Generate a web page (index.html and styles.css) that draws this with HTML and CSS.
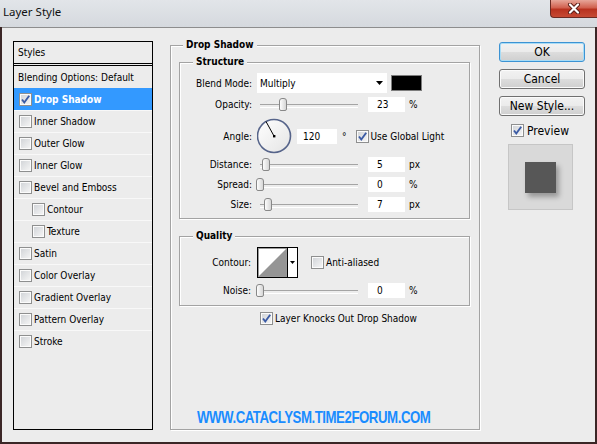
FILE: index.html
```html
<!DOCTYPE html>
<html>
<head>
<meta charset="utf-8">
<title>Layer Style</title>
<link rel="stylesheet" href="styles.css">
</head>
<body>
<div class="window">
  <div class="titlebar">
    <span class="title">Layer Style</span>
    <div class="close">
      <svg width="16" height="11" viewBox="0 0 16 11"><path d="M4 1.5 L12 9.5 M12 1.5 L4 9.5" stroke="#5a1d16" stroke-width="4" stroke-linecap="round"/><path d="M4 1.5 L12 9.5 M12 1.5 L4 9.5" stroke="#fff" stroke-width="2.2" stroke-linecap="round"/></svg>
    </div>
  </div>
  <div class="client">
    <div class="styles">
      <div class="styles-head">Styles</div>
      <div class="item plain">Blending Options: Default</div>
      <div class="item selected"><span class="cb"><svg width="11" height="11" viewBox="0 0 11 11"><path d="M2 5.5 L4.3 8.5 L9.2 1.8" stroke="#3b5ba5" stroke-width="1.9" fill="none"/></svg></span>Drop Shadow</div>
      <div class="item"><span class="cb"></span>Inner Shadow</div>
      <div class="item"><span class="cb"></span>Outer Glow</div>
      <div class="item"><span class="cb"></span>Inner Glow</div>
      <div class="item"><span class="cb"></span>Bevel and Emboss</div>
      <div class="item sub"><span class="cb"></span>Contour</div>
      <div class="item sub"><span class="cb"></span>Texture</div>
      <div class="item"><span class="cb"></span>Satin</div>
      <div class="item"><span class="cb"></span>Color Overlay</div>
      <div class="item"><span class="cb"></span>Gradient Overlay</div>
      <div class="item"><span class="cb"></span>Pattern Overlay</div>
      <div class="item"><span class="cb"></span>Stroke</div>
    </div>

    <fieldset class="group outer">
      <legend>Drop Shadow</legend>
      <fieldset class="group inner structure">
        <legend>Structure</legend>
        <div class="row r-blend">
          <span class="lbl">Blend Mode:</span>
          <div class="select"><span>Multiply</span><svg width="7" height="4" viewBox="0 0 7 4"><path d="M0 0 H7 L3.5 4 Z" fill="#000"/></svg></div>
          <span class="swatch"></span>
        </div>
        <div class="row r-15 r-opacity">
          <span class="lbl">Opacity:</span>
          <div class="slider"><span class="thumb" style="left:19px"></span></div>
          <span class="num">23</span><span class="unit">%</span>
        </div>
        <div class="row r-angle">
          <span class="lbl">Angle:</span>
          <svg class="dial" width="36" height="36" viewBox="0 0 36 36">
            <defs><linearGradient id="dg" x1="0" y1="0" x2="1" y2="1"><stop offset="0" stop-color="#ffffff"/><stop offset="1" stop-color="#e4e4e4"/></linearGradient></defs>
            <circle cx="17" cy="18" r="16.5" fill="url(#dg)" stroke="#56648a" stroke-width="1.6"/>
            <line x1="17" y1="18" x2="9" y2="3.5" stroke="#000" stroke-width="1"/>
            <rect x="16" y="17" width="2.4" height="2.4" fill="#000"/>
          </svg>
          <span class="num num-angle">120</span><span class="deg">°</span>
          <span class="cb cb-global"><svg width="11" height="11" viewBox="0 0 11 11"><path d="M2 5.5 L4.3 8.5 L9.2 1.8" stroke="#3b5ba5" stroke-width="1.9" fill="none"/></svg></span><span class="cbtext">Use Global Light</span>
        </div>
        <div class="row r-15 r-distance">
          <span class="lbl">Distance:</span>
          <div class="slider"><span class="thumb" style="left:2px"></span></div>
          <span class="num">5</span><span class="unit">px</span>
        </div>
        <div class="row r-15 r-spread">
          <span class="lbl">Spread:</span>
          <div class="slider"><span class="thumb" style="left:-4px"></span></div>
          <span class="num">0</span><span class="unit">%</span>
        </div>
        <div class="row r-15 r-size">
          <span class="lbl">Size:</span>
          <div class="slider"><span class="thumb" style="left:4px"></span></div>
          <span class="num">7</span><span class="unit">px</span>
        </div>
      </fieldset>

      <fieldset class="group inner quality">
        <legend>Quality</legend>
        <div class="row r-contour">
          <span class="lbl">Contour:</span>
          <svg class="contour" width="41" height="31" viewBox="0 0 41 31">
            <rect x="0.5" y="0.5" width="40" height="30" fill="#fff" stroke="#000"/>
            <rect x="1.5" y="1.5" width="28" height="28" fill="#fff" stroke="#9a9a9a"/>
            <polygon points="2,29 29,2 29,29" fill="#959595"/>
            <line x1="30.5" y1="0" x2="30.5" y2="31" stroke="#000"/>
            <path d="M33 14 H38 L35.5 17 Z" fill="#000"/>
          </svg>
          <span class="cb cb-anti"></span><span class="cbtext">Anti-aliased</span>
        </div>
        <div class="row r-15 r-noise">
          <span class="lbl">Noise:</span>
          <div class="slider"><span class="thumb" style="left:-4px"></span></div>
          <span class="num">0</span><span class="unit">%</span>
        </div>
      </fieldset>

      <div class="row knock">
        <span class="cb"><svg width="11" height="11" viewBox="0 0 11 11"><path d="M2 5.5 L4.3 8.5 L9.2 1.8" stroke="#3b5ba5" stroke-width="1.9" fill="none"/></svg></span><span class="cbtext">Layer Knocks Out Drop Shadow</span>
      </div>

      <div class="watermark"><span class="wm-text">WWW.CATACLYSM.TIME2FORUM.COM</span></div>
    </fieldset>

    <div class="side">
      <div class="btn default">OK</div>
      <div class="btn">Cancel</div>
      <div class="btn">New Style...</div>
      <div class="preview-row">
        <span class="cb"><svg width="11" height="11" viewBox="0 0 11 11"><path d="M2 5.5 L4.3 8.5 L9.2 1.8" stroke="#3b5ba5" stroke-width="1.9" fill="none"/></svg></span><span class="cbtext">Preview</span>
      </div>
      <div class="preview-box"><div class="preview-square"></div></div>
    </div>
  </div>
</div>
</body>
</html>
```

FILE: styles.css
```css
* { box-sizing: border-box; }
html, body { margin: 0; padding: 0; }
body {
  width: 597px;
  height: 444px;
  overflow: hidden;
  background: #3b2626;
  font-family: "DejaVu Sans Condensed", "DejaVu Sans", sans-serif;
  font-stretch: condensed;
  font-size: 10px;
  color: #000;
}
.window {
  display: flex;
  flex-direction: column;
  height: 444px;
}
.titlebar {
  height: 27px;
  flex: none;
  display: flex;
  align-items: flex-start;
  background: linear-gradient(to bottom, #e2e5e9, #d5d9de);
}
.title {
  font-family: "Noto Sans", "Open Sans", sans-serif;
  font-stretch: normal;
  font-size: 11.5px;
  line-height: 16px;
  margin: 4px 0 0 3px;
  color: #111;
}
.close {
  margin-left: auto;
  width: 47px;
  height: 18px;
  border: 1px solid #6b2a22;
  border-top: none;
  border-right: none;
  border-radius: 0 0 0 4px;
  background: linear-gradient(to bottom, #e7a699, #d1614f 45%, #b8321f 55%, #c64a34);
  display: flex;
  align-items: center;
  justify-content: center;
}
.client {
  flex: 1;
  margin: 0 2px 2px 2px;
  background: #ececec;
  border-top: 1px solid #8d8d8d;
  display: flex;
  align-items: flex-start;
  padding: 10px 0 0 11px;
}

/* Styles list */
.styles {
  flex: none;
  width: 140px;
  height: 389px;
  margin-top: 3px;
  border: 1px solid #000;
  background: #ececec;
}
.styles-head {
  height: 24px;
  line-height: 21px;
  padding-left: 4px;
  border-bottom: 3px double #000;
}
.item {
  height: 22px;
  display: flex;
  align-items: center;
  padding-left: 5px;
  border-top: 1px solid #f8f8f8;
  white-space: nowrap;
}
.item.plain {
  padding-left: 4px;
  border-top: none;
}
.item.sub { padding-left: 18px; }
.item.selected {
  background: #3399ff;
  border-top-color: #3399ff;
  color: #fff;
  font-weight: bold;
}
.item .cb { margin-right: 2px; }

/* Checkbox */
.cb {
  flex: none;
  width: 13px;
  height: 13px;
  border: 1px solid #8e8f8f;
  background: linear-gradient(135deg, #cfd2d6, #f7f7f7);
  box-shadow: inset 0 0 0 1px #fbfbfb;
  display: inline-flex;
  align-items: center;
  justify-content: center;
}
.cbtext { margin-left: 2px; white-space: nowrap; }

/* Group boxes */
fieldset.group {
  margin: 0;
  min-width: 0;
  border: 1px solid #a3a3a3;
  box-shadow: inset 1px 1px 0 #fff, 1px 1px 0 #fff;
}
fieldset.group > legend {
  font-weight: bold;
  line-height: 14px;
  padding: 0 3px;
  background: #ececec;
}
fieldset.outer {
  flex: none;
  width: 310px;
  height: 392px;
  margin-left: 17px;
  padding: 3px 9px 0 8px;
}
fieldset.outer > legend { margin-left: 4px; }
fieldset.inner {
  width: 291px;
  padding: 0;
}
fieldset.inner > legend { margin-left: 13px; }
fieldset.structure { padding-bottom: 6px; }
fieldset.quality { margin-top: 10px; padding-bottom: 7px; }

.row {
  display: flex;
  align-items: center;
  white-space: nowrap;
}
.lbl {
  flex: none;
  width: 72px;
  margin-right: 5px;
  text-align: right;
}
.quality .lbl { width: 71px; margin-right: 6px; }
.r-15 { height: 15px; }
.r-blend { height: 20px; margin-top: 4px; }
.r-opacity { margin-top: 4px; }
.r-angle { height: 36px; margin-top: 6px; }
.r-distance { margin-top: 3px; }
.r-spread { margin-top: 5px; }
.r-size { margin-top: 5px; }
.r-contour { height: 30px; margin-top: 4px; }
.r-noise { margin-top: 6px; }

.select {
  flex: none;
  width: 130px;
  height: 20px;
  background: #fff;
  display: flex;
  align-items: center;
  justify-content: space-between;
  padding: 0 4px 0 3px;
}
.swatch {
  flex: none;
  width: 31px;
  height: 16px;
  margin-left: 4px;
  background: #000;
  border: 1px solid #7d7d7d;
}
.slider {
  flex: none;
  position: relative;
  width: 98px;
  height: 15px;
  margin-left: 3px;
}
.slider::before {
  content: "";
  position: absolute;
  left: 0;
  right: 0;
  top: 7px;
  height: 2px;
  border-top: 1px solid #a4a4a4;
  border-bottom: 1px solid #fff;
}
.thumb {
  position: absolute;
  top: 1px;
  width: 8px;
  height: 13px;
  border: 1px solid #888;
  border-radius: 3px 3px 2px 2px;
  background: linear-gradient(to right, #fdfdfd, #d6d6d6);
}
.num {
  flex: none;
  width: 37px;
  height: 15px;
  line-height: 15px;
  margin-left: 10px;
  padding-left: 9px;
  background: #fff;
}
.unit { margin-left: 4px; }
.dial { flex: none; }
.num-angle {
  width: 40px;
  margin-left: 4px;
  padding-left: 6px;
}
.deg { margin-left: 5px; }
.cb-global { margin-left: 9px; }
.contour { flex: none; }
.cb-anti { margin-left: 13px; }
.knock {
  height: 13px;
  margin-top: 6px;
  padding-left: 81px;
}
.watermark {
  margin-top: 83px;
  padding-left: 18px;
  height: 20px;
  white-space: nowrap;
}
.wm-text {
  display: inline-block;
  font-family: "Liberation Sans", sans-serif;
  font-stretch: normal;
  font-weight: bold;
  font-size: 17px;
  line-height: 20px;
  letter-spacing: -0.6px;
  color: #1a8cff;
  transform: scaleX(0.78);
  transform-origin: left center;
}

/* Right side */
.side {
  flex: none;
  width: 86px;
  margin-left: 19px;
  margin-top: 4px;
  display: flex;
  flex-direction: column;
}
.btn {
  height: 20px;
  margin-bottom: 7px;
  border: 1px solid #707070;
  border-radius: 3px;
  background: linear-gradient(to bottom, #f2f2f2 0%, #ebebeb 49%, #dddddd 50%, #cfcfcf 100%);
  box-shadow: inset 0 0 0 1px #fbfbfb;
  font-size: 12px;
  display: flex;
  align-items: center;
  justify-content: center;
}
.btn.default {
  border-color: #3c93d3;
  box-shadow: inset 0 0 0 1px #a8dcf6;
}
.preview-row {
  display: flex;
  align-items: center;
  height: 13px;
  margin-top: 1px;
  padding-left: 12px;
  font-size: 12px;
}
.preview-row .cbtext { margin-left: 3px; }
.preview-box {
  width: 65px;
  height: 66px;
  margin-top: 7px;
  margin-left: 9px;
  background: #d9d9d9;
  border: 1px solid #c6c6c6;
  display: flex;
  align-items: center;
  justify-content: center;
}
.preview-square {
  width: 31px;
  height: 31px;
  background: #575757;
  box-shadow: 3px 4px 5px rgba(0, 0, 0, 0.3);
}
```
